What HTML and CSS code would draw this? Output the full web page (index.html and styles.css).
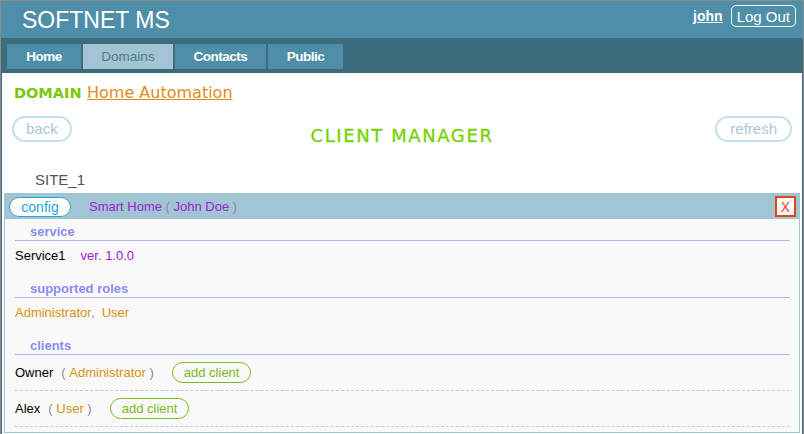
FILE: index.html
```html
<!DOCTYPE html>
<html>
<head>
<meta charset="utf-8">
<link rel="stylesheet" href="styles.css">
</head>
<body>
<div class="frame">
  <header class="top">
    <div class="brand">SOFTNET MS</div>
    <div class="user">
      <a class="uname" href="#">john</a>
      <span class="logout">Log Out</span>
    </div>
  </header>
  <nav class="nav">
    <span class="tab t-home">Home</span>
    <span class="tab t-domains active">Domains</span>
    <span class="tab t-contacts">Contacts</span>
    <span class="tab t-public">Public</span>
  </nav>
  <main class="content">
    <div class="domain"><span class="dlabel">DOMAIN</span> <a class="dname" href="#">Home Automation</a></div>
    <div class="toolbar">
      <span class="pill back">back</span>
      <h1 class="title">CLIENT MANAGER</h1>
      <span class="pill refresh">refresh</span>
    </div>
    <div class="site">SITE_1</div>
    <section class="panel">
      <div class="phead">
        <span class="config">config</span>
        <span class="pname">Smart Home <span class="paren">(</span> John Doe <span class="paren">)</span></span>
        <span class="close">X</span>
      </div>
      <div class="pbody">
        <div class="sect">service</div>
        <div class="row"><span class="blk">Service1</span><span class="ver">ver. 1.0.0</span></div>
        <div class="sect">supported roles</div>
        <div class="row roles"><span class="role">Administrator</span>,&nbsp; <span class="role">User</span></div>
        <div class="sect">clients</div>
        <div class="client"><span class="cname">Owner</span><span class="paren">(</span>&nbsp;<span class="role">Administrator</span>&nbsp;<span class="paren">)</span><span class="add">add client</span></div>
        <div class="client"><span class="cname">Alex</span><span class="paren">(</span>&nbsp;<span class="role">User</span>&nbsp;<span class="paren">)</span><span class="add">add client</span></div>
      </div>
    </section>
  </main>
</div>
</body>
</html>
```

FILE: styles.css
```css
* { box-sizing: border-box; }
html, body { margin: 0; padding: 0; height: 100%; }
body { font-family: "Liberation Sans", Arial, sans-serif; background: #fff; }

.frame {
  height: 434px;
  border-top: 1px solid #8c8c8c;
  border-left: 1px solid #8c8c8c;
  border-right: 1px solid #8c8c8c;
  overflow: hidden;
}

.top {
  height: 37px;
  background: #4f8ea8;
  display: flex;
  align-items: center;
  justify-content: space-between;
  padding: 0 7px 0 21px;
}
.brand { color: #fff; font-size: 23px; padding-top: 2px; }
.user { display: flex; align-items: center; gap: 8px; margin-top: -7px; }
.uname { color: #fff; font-weight: bold; font-size: 14px; }
.logout {
  color: #fff; font-size: 15px; border: 1px solid #fff; border-radius: 5px;
  padding: 1px 5px 0 5px; line-height: 19px;
}

.nav {
  height: 35px;
  background: #3d6b7e;
  display: flex;
  gap: 2px;
  padding: 6px 0 0 6px;
}
.tab {
  height: 25px; background: #4f8ea8; color: #fff; font-weight: bold;
  font-size: 13.5px; letter-spacing: -0.5px; display: flex; align-items: center; justify-content: center;
}
.t-home { width: 74px; }
.t-domains { width: 90px; }
.t-contacts { width: 91px; }
.t-public { width: 75px; }
.tab.active { background: #a2c4d3; color: #4d7a8c; font-weight: normal; letter-spacing: 0; font-size: 13.5px; }

.content {
  border-left: 1px solid #3d6b7e;
  border-right: 1px solid #3d6b7e;
  height: 361px;
  padding: 0 2px;
}
.domain { padding: 10px 0 0 10px; height: 43px; }
.dlabel { font-family: "DejaVu Sans", Verdana, sans-serif; font-weight: bold; color: #7ac70c; font-size: 14.5px; }
.dname { font-family: "DejaVu Sans", Verdana, sans-serif; color: #e08b1c; font-size: 16px; margin-left: 1px; }

.toolbar {
  display: grid; grid-template-columns: 1fr auto 1fr; align-items: start;
  padding: 0 8px 0 8px; height: 52px;
}
.pill {
  border: 2px solid #c4dfea; color: #a8c7d5; border-radius: 13px;
  font-size: 15px; height: 26px; line-height: 22px; padding: 0 12px;
}
.back { justify-self: start; }
.refresh { justify-self: end; padding: 0 13px; }
.title {
  margin: 9px 0 0 0; font-family: "DejaVu Sans", Verdana, sans-serif;
  font-weight: normal; font-size: 18px; letter-spacing: 1.6px; color: #76d102;
  -webkit-text-stroke: 0.3px #76d102;
}

.site { color: #555; font-size: 15px; padding-left: 31px; height: 25px; line-height: 23px; }

.panel { border: 1px solid #a2c5d4; background: #f9f9f9; height: 240px; }
.phead {
  background: #a2c5d4; height: 25px; display: flex; align-items: center; padding: 0 3px 0 4px;
}
.config {
  background: #fff; border: 1px solid #2aa3d8; color: #2aa3d8; border-radius: 11px;
  font-size: 14px; width: 62px; height: 20px; line-height: 18px; text-align: center;
}
.pname { color: #9b22d2; font-size: 13px; margin-left: 18px; flex: 1; }
.paren { color: #8a8a9a; }
.close {
  background: #fff; border: 2px solid #e0451a; color: #ff3b1a; width: 21px; height: 21px;
  font-size: 14px; display: flex; align-items: center; justify-content: center;
}

.pbody { padding: 0 9px 0 10px; }
.sect {
  color: #8b8bf5; font-weight: bold; font-size: 13px; padding: 5px 0 0 15px; height: 22px;
  border-bottom: 1px solid #b6b6f7; line-height: 15px;
}
.row { font-size: 13px; height: 35px; padding-top: 7px; line-height: 16px; }
.blk { color: #000; margin-right: 15px; }
.ver { color: #9b22d2; }
.roles { color: #8a8a9a; }
.role { color: #d4930f; }
.client {
  font-size: 13px; height: 36px; display: flex; align-items: center;
  border-bottom: 1px dashed #c4c4f8;
}
.cname { color: #000; margin-right: 8px; }
.add {
  border: 1px solid #7cba1a; color: #7cba1a; border-radius: 11px; font-size: 13px;
  height: 21px; line-height: 19px; padding: 0 11px; margin-left: 18px;
}
```
